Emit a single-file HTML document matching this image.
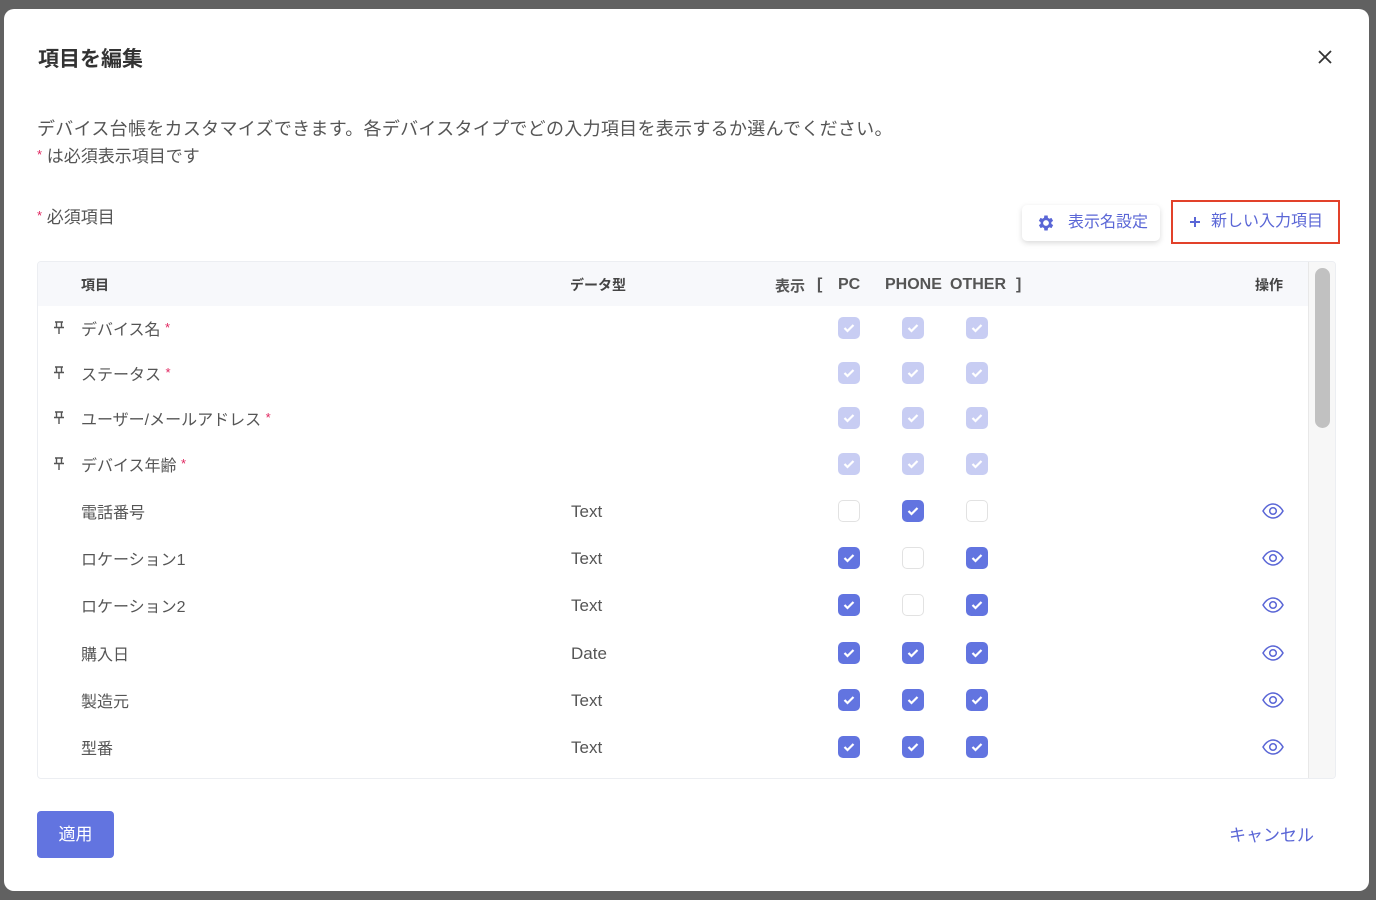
<!DOCTYPE html>
<html><head><meta charset="utf-8"><style>
*{box-sizing:border-box;margin:0;padding:0}
body{width:1376px;height:900px;background:#616161;font-family:"Liberation Sans","Noto Sans CJK JP",sans-serif;position:relative;overflow:hidden;color:#333}
.modal{position:absolute;left:4px;top:9px;width:1365px;height:882px;background:#fff;border-radius:10px}
.abs{position:absolute}
.t{color:#555;font-size:17px}
.ast{color:#e0245e;font-size:13px;position:relative;top:-3px}
.cb{position:absolute;width:22px;height:22px;border-radius:5px;transform:translate(-11px,-11px)}
.on{background:#6274e0}
.dis{background:#c8cdf3}
.off{border:1px solid #e2e2e2;background:#fff}
.cb svg{position:absolute;left:5px;top:6px}
.hd{position:absolute;top:14px;font-size:16px;font-weight:bold;color:#555}
</style></head><body>
<div class="modal">
<div class="abs" style="left:34px;top:34px;font-size:21px;font-weight:bold;color:#333">項目を編集</div>
<svg class="abs" style="left:1314px;top:41px" width="14" height="14" viewBox="0 0 14 14"><path d="M1 1L13 13M13 1L1 13" stroke="#333" stroke-width="1.8"/></svg>
<div class="abs t" style="left:33px;top:106px;font-size:18px;letter-spacing:0.3px">デバイス台帳をカスタマイズできます。各デバイスタイプでどの入力項目を表示するか選んでください。</div>
<div class="abs t" style="left:33px;top:133px"><span class="ast">*</span> は必須表示項目です</div>
<div class="abs t" style="left:33px;top:194px"><span class="ast">*</span> 必須項目</div>
<div class="abs" style="left:1018px;top:196px;width:138px;height:36px;border-radius:5px;box-shadow:0 2px 6px rgba(0,0,0,.15);color:#5a66d6;font-size:16px;line-height:36px;padding-left:46px">表示名設定
<svg class="abs" style="left:14px;top:8px" width="20" height="20" viewBox="0 0 24 24"><path fill="#5a66d6" d="M19.4 13a7.5 7.5 0 000-2l2.1-1.6-2-3.5-2.5 1a7.7 7.7 0 00-1.7-1L15 3h-4l-.4 2.9a7.7 7.7 0 00-1.7 1l-2.5-1-2 3.5L6.6 11a7.5 7.5 0 000 2l-2.1 1.6 2 3.5 2.5-1a7.7 7.7 0 001.7 1L11 21h4l.4-2.9a7.7 7.7 0 001.7-1l2.5 1 2-3.5zM13 15.5a3.5 3.5 0 110-7 3.5 3.5 0 010 7z" transform="translate(-1 0)"/></svg></div>
<div class="abs" style="left:1167px;top:191px;width:169px;height:44px;border:2px solid #e2412a;color:#5a66d6;font-size:16px;line-height:40px;padding-left:38px">新しい入力項目<svg class="abs" style="left:16px;top:14px" width="12" height="12" viewBox="0 0 12 12"><path d="M6 1v10M1 6h10" stroke="#5a66d6" stroke-width="2"/></svg></div>
<div class="abs" style="left:33px;top:252px;width:1299px;height:518px;border:1px solid #eceef2;border-radius:4px;overflow:hidden">
<div class="abs" style="left:0;top:0;width:1270px;height:44px;background:#f7f8fb"></div>
<div class="abs" style="left:1270px;top:0;width:29px;height:518px;background:#f7f7f7;border-left:1px solid #e8e8e8"></div>
<div class="abs" style="left:1277px;top:6px;width:15px;height:160px;background:#c1c1c1;border-radius:8px"></div>
<div class="abs" style="left:43px;top:13px;font-size:14px;font-weight:bold;color:#444">項目</div>
<div class="abs" style="left:532px;top:13px;font-size:14px;font-weight:bold;color:#444">データ型</div>
<div class="hd" style="left:737px;top:13px;font-size:15px">表示</div>
<div class="hd" style="left:779px">[</div>
<div class="hd" style="left:800px">PC</div>
<div class="hd" style="left:847px">PHONE</div>
<div class="hd" style="left:912px">OTHER</div>
<div class="hd" style="left:978px">]</div>
<div class="abs" style="left:1217px;top:13px;font-size:14px;font-weight:bold;color:#444">操作</div>
</div>
</div>
<div id="rows"></div>
<div class="abs" style="left:37px;top:811px;width:77px;height:47px;background:#6274e0;border-radius:4px;color:#fff;font-size:17px;line-height:47px;text-align:center">適用</div>
<div class="abs" style="left:1229px;top:821px;color:#5a66d6;font-size:17px">キャンセル</div>
<script>
var rows=[[328,"デバイス名",1,"","ddd"],[373,"ステータス",1,"","ddd"],[418,"ユーザー/メールアドレス",1,"","ddd"],[464,"デバイス年齢",1,"","ddd"],
[511,"電話番号",0,"Text","fnf"],[558,"ロケーション1",0,"Text","nfn"],[605,"ロケーション2",0,"Text","nfn"],[653,"購入日",0,"Date","nnn"],[700,"製造元",0,"Text","nnn"],[747,"型番",0,"Text","nnn"]];
var h="",xs=[849,913,977];
rows.forEach(function(r){var y=r[0];
if(r[2])h+='<svg class="abs" style="left:53px;top:'+(y-7)+'px" width="12" height="14" viewBox="0 0 12 14"><path d="M2 1h8M3.5 1v5M8.5 1v5M1 6.5h10M6 6.5V13" stroke="#555" stroke-width="1.4" fill="none"/></svg>';
h+='<div class="abs t" style="left:81px;top:'+(y-12)+'px;font-size:16px">'+r[1]+(r[2]?' <span class="ast">*</span>':'')+'</div>';
if(r[3])h+='<div class="abs t" style="left:571px;top:'+(y-9)+'px;font-size:17px">'+r[3]+'</div>';
for(var i=0;i<3;i++){var c=r[4][i];var cl=c=="d"?"dis":c=="n"?"on":"off";
h+='<div class="cb '+cl+'" style="left:'+xs[i]+'px;top:'+y+'px">'+(c!="f"?'<svg width="12" height="10" viewBox="0 0 12 10"><path d="M1.5 5l3 3 6-6" stroke="#fff" stroke-width="2.2" fill="none"/></svg>':'')+'</div>';}
if(!r[2])h+='<svg class="abs" style="left:1262px;top:'+(y-8)+'px" width="22" height="16" viewBox="0 0 22 16"><path d="M1 8C4 3 7.5 1 11 1s7 2 10 7c-3 5-6.5 7-10 7S4 13 1 8z" fill="none" stroke="#5a66d6" stroke-width="1.5"/><circle cx="11" cy="8" r="3.3" fill="none" stroke="#5a66d6" stroke-width="1.5"/></svg>';
});
document.getElementById("rows").innerHTML=h;
</script>
</body></html>
